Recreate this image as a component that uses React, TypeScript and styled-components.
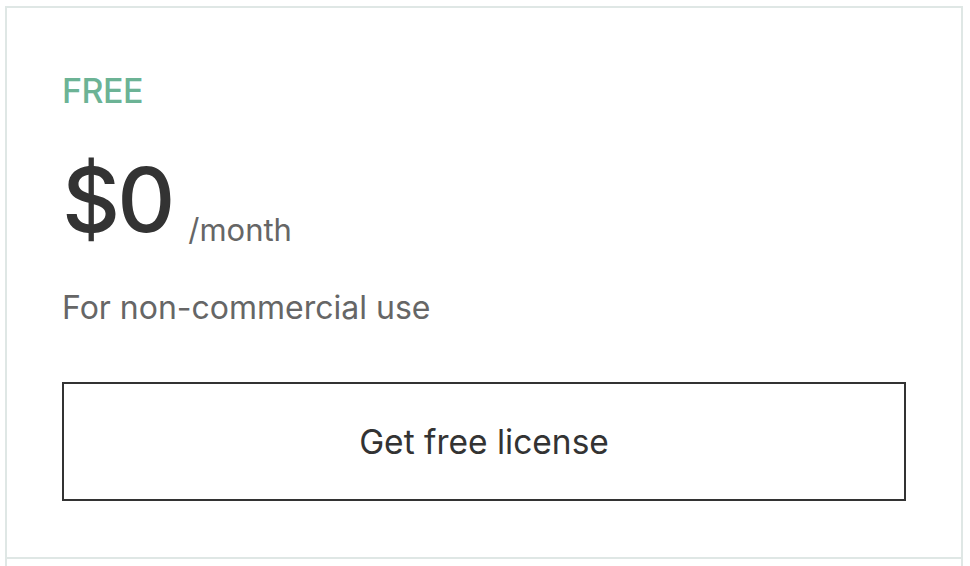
import React from "react";
import styled, { createGlobalStyle } from "styled-components";

const Global = createGlobalStyle`
  html, body { margin: 0; padding: 0; background: #ffffff; }
  body { font-family: Inter, "Noto Sans", sans-serif; }
`;

const Page = styled.div`
  padding: 6px 0 0 5px;
  width: 965px;
  box-sizing: border-box;
`;

const Card = styled.div`
  width: 958px;
  box-sizing: border-box;
  border: 2px solid #dfe7e5;
  border-bottom: none;
  height: 570px;
  display: flex;
  flex-direction: column;
`;

const Top = styled.div`
  padding: 63px 55px 56px 55px;
  border-bottom: 2px solid #dfe7e5;
  display: flex;
  flex-direction: column;
`;

const Tier = styled.div`
  color: #6cb395;
  font-size: 34px;
  font-weight: 500;
  line-height: 40px;
  letter-spacing: -0.5px;
`;

const PriceRow = styled.div`
  display: flex;
  align-items: flex-end;
  margin-top: 44px;
  gap: 16px;
`;

const Amount = styled.span`
  color: #333333;
  font-size: 90px;
  font-weight: 500;
  line-height: 90px;
  letter-spacing: -3px;
`;

const Period = styled.span`
  color: #666666;
  font-size: 31px;
  line-height: 30px;
`;

const Desc = styled.div`
  color: #666666;
  font-size: 32px;
  line-height: 36px;
  margin-top: 45px;
`;

const Button = styled.button`
  margin-top: 56px;
  height: 119px;
  width: 100%;
  box-sizing: border-box;
  background: #ffffff;
  border: 2px solid #333333;
  color: #333333;
  font-family: Inter, "Noto Sans", sans-serif;
  font-size: 33.5px;
  cursor: pointer;
`;

export default function App() {
  return (
    <>
      <Global />
      <Page>
        <Card>
          <Top>
            <Tier>FREE</Tier>
            <PriceRow>
              <Amount>$0</Amount>
              <Period>/month</Period>
            </PriceRow>
            <Desc>For non-commercial use</Desc>
            <Button>Get free license</Button>
          </Top>
        </Card>
      </Page>
    </>
  );
}
